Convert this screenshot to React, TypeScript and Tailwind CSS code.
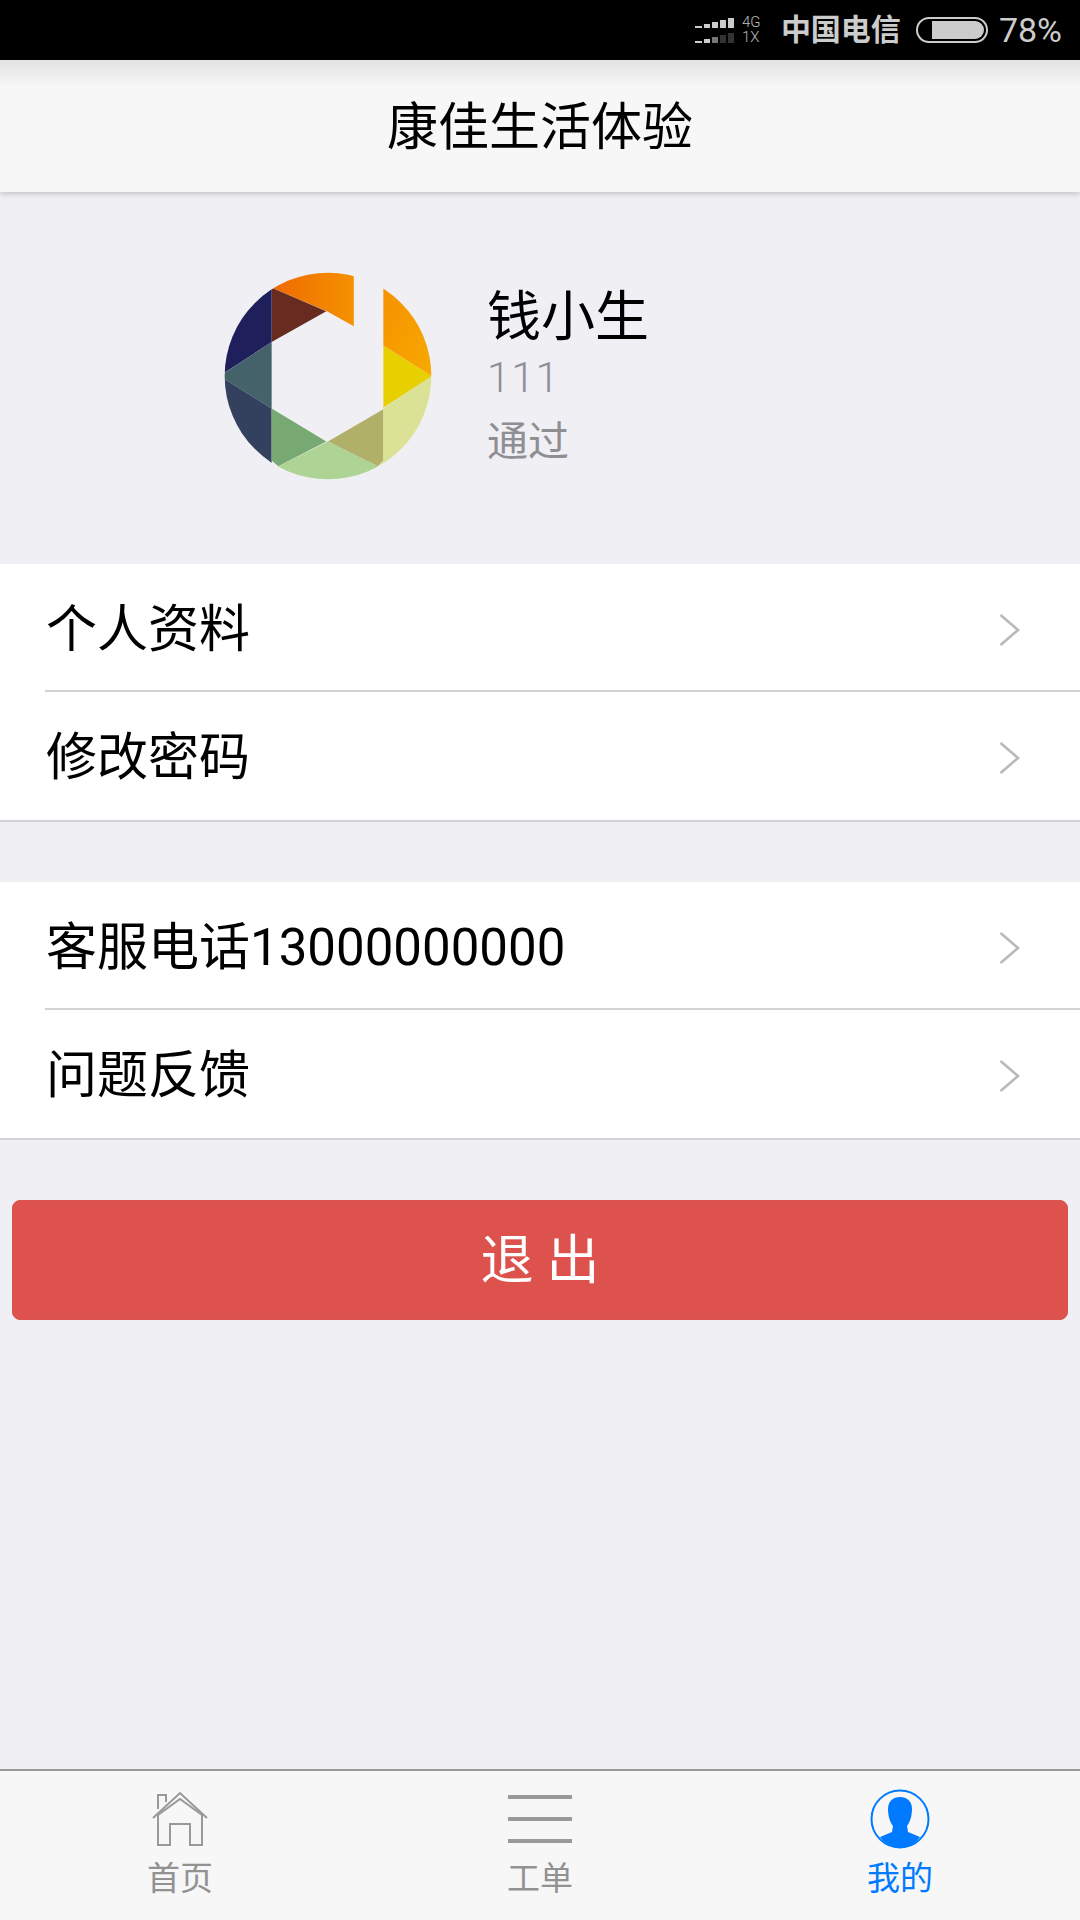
const cjk = "font-['Roboto','Noto_Sans_CJK_SC',sans-serif]";

function SignalRow({ dim }: { dim?: boolean }) {
  const bars = [
    { w: 7, h: 2 },
    { w: 6, h: 4 },
    { w: 6, h: 6 },
    { w: 6, h: 8 },
    { w: 6, h: 10 },
  ];
  return (
    <div className="flex items-end gap-[2px] h-[10px]">
      {bars.map((b, i) => (
        <div
          key={i}
          className={dim && i > 1 ? (i === 2 ? "bg-[#777]" : "bg-[#333]") : "bg-[#ccc]"}
          style={{ width: b.w, height: b.h }}
        />
      ))}
    </div>
  );
}

function StatusBar() {
  return (
    <div className={`h-[60px] bg-black flex items-center justify-end pr-[18px] ${cjk}`}>
      <div className="flex flex-col gap-[5px] mr-[8px]">
        <SignalRow />
        <SignalRow dim />
      </div>
      <div className="flex flex-col text-[#bbb] text-[15px] leading-[15px] font-light mr-[18px] w-[21px]">
        <span>4G</span>
        <span>1X</span>
      </div>
      <span className="text-[#ccc] text-[30px] font-bold leading-none mr-[15px]">中国电信</span>
      <div className="w-[72px] h-[26px] rounded-full border-2 border-[#ccc] p-[2px] flex justify-end mr-[11px]">
        <div className="w-[52px] h-full rounded-r-full bg-[#ccc]" />
      </div>
      <span className="text-[#ccc] text-[34px] leading-none">78%</span>
    </div>
  );
}

function Logo() {
  return (
    <svg width="208" height="208" viewBox="73 63 620 620" className="shrink-0 blur-[0.4px]">
      <defs>
        <clipPath id="disc">
          <circle cx="383" cy="373" r="308" />
        </clipPath>
        <linearGradient id="topOrange" x1="0" y1="0" x2="1" y2="0">
          <stop offset="0" stopColor="#ee6a00" />
          <stop offset="1" stopColor="#f59200" />
        </linearGradient>
        <linearGradient id="sideOrange" x1="0" y1="0" x2="1" y2="1">
          <stop offset="0" stopColor="#f58f00" />
          <stop offset="1" stopColor="#f8ab00" />
        </linearGradient>
      </defs>
      <g clipPath="url(#disc)">
        <polygon points="215,110 300,30 460,30 460,225 380,180" fill="url(#topOrange)" />
        <polygon points="215,110 378,180 215,272" fill="#682b20" />
        <polygon points="60,373 215,272 215,470" fill="#43626a" />
        <polygon points="215,60 215,272 70,366 60,200" fill="#1f1f5c" />
        <polygon points="60,373 215,470 215,630 240,700 60,560" fill="#33415f" />
        <polygon points="215,470 378,568 235,642 215,625" fill="#78a972" />
        <polygon points="235,642 383,568 532,642 532,720 235,720" fill="#aed495" />
        <polygon points="383,568 548,472 548,625 532,642" fill="#b1b069" />
        <polygon points="548,470 700,366 700,720 532,720 532,642 548,625" fill="#dbe195" />
        <polygon points="548,282 692,373 548,468" fill="#e8cf00" />
        <polygon points="548,115 548,282 692,373 720,373 720,40 548,40" fill="url(#sideOrange)" />
      </g>
    </svg>
  );
}

function Chevron() {
  return (
    <svg width="24" height="36" viewBox="0 0 24 36" fill="none" stroke="#b9b9b9" strokeWidth="2.6" className="mt-[2px]">
      <path d="M2.5 3 L20 18 L2.5 33" />
    </svg>
  );
}

function Row({ label, divider }: { label: string; divider?: boolean }) {
  return (
    <div className="relative h-[128px] flex items-center justify-between pl-[46px] pr-[58px] pt-[2px]">
      <span className="text-[51px] leading-none text-black">{label}</span>
      <Chevron />
      {divider && <div className="absolute left-[45px] right-0 bottom-0 h-[2px] bg-[#d2d2d4]" />}
    </div>
  );
}

function HomeIcon() {
  return (
    <svg width="56" height="56" viewBox="0 0 56 56" fill="none" stroke="#999" strokeWidth="2">
      <path d="M1 27 L28 2 L55 27" />
      <path d="M6 24 V54 H18 V33 H38 V54 H50 V24 L28 8 Z" />
      <path d="M6 18 V4 H14 V11" />
    </svg>
  );
}

function ListIcon() {
  return (
    <div className="w-[64px] h-[48px] flex flex-col justify-between">
      <div className="h-[4px] bg-[#999]" />
      <div className="h-[4px] bg-[#999]" />
      <div className="h-[4px] bg-[#999]" />
    </div>
  );
}

function UserIcon() {
  return (
    <svg width="60" height="60" viewBox="0 0 60 60">
      <circle cx="30" cy="30" r="28.5" fill="none" stroke="#007aff" strokeWidth="2" />
      <path
        d="M30 8 C38 8 42 13 42 20 C42 27 40 33 37 37 L38 43 L50 48 C45 55 38 59 30 59 C22 59 15 55 10 48 L22 43 L23 37 C20 33 18 27 18 20 C18 13 22 8 30 8 Z"
        fill="#007aff"
      />
    </svg>
  );
}

function Tab({ icon, label, active }: { icon: React.ReactNode; label: string; active?: boolean }) {
  return (
    <div className="flex-1 flex flex-col items-center">
      <div className="h-[60px] flex items-center justify-center">{icon}</div>
      <span className={`mt-[10px] text-[33px] leading-[40px] ${active ? "text-[#007aff]" : "text-[#929292]"}`}>
        {label}
      </span>
    </div>
  );
}

export default function App() {
  return (
    <div className={`w-[1080px] h-[1920px] flex flex-col bg-[#efeff4] overflow-hidden ${cjk}`}>
      <StatusBar />
      <div className="h-[132px] pt-[2px] flex items-center justify-center shadow-[0_2px_5px_rgba(0,0,0,0.18)] bg-gradient-to-b from-[#e2e2e2] via-[#f7f7f7] via-[20%] to-[#f7f7f7]">
        <h1 className="text-[51px] leading-none text-black font-normal">康佳生活体验</h1>
      </div>

      <div className="h-[372px] flex items-center pl-[224px] pb-[4px]">
        <Logo />
        <div className="ml-[55px] mt-[12px] flex flex-col">
          <span className="text-[54px] leading-[62px] text-black">钱小生</span>
          <span className="text-[42px] leading-[58px] font-light text-[#8e8e93] tracking-[1px]">111</span>
          <span className="text-[41px] leading-[70px] text-[#8e8e93]">通过</span>
        </div>
      </div>

      <div className="bg-white border-b-2 border-[#d2d2d4]">
        <Row label="个人资料" divider />
        <Row label="修改密码" />
      </div>

      <div className="mt-[60px] bg-white border-b-2 border-[#d2d2d4]">
        <Row label="客服电话13000000000" divider />
        <Row label="问题反馈" />
      </div>

      <div className="mt-[60px] mx-[12px] h-[120px] pt-[3px] rounded-[8px] bg-[#dd524d] border border-[#d9534f] flex items-center justify-center text-white text-[53px] leading-none whitespace-pre">
        退 出
      </div>

      <div className="mt-auto h-[151px] bg-[#f7f7f7] border-t-2 border-[#9a9a9a] pt-[18px] flex">
        <Tab icon={<HomeIcon />} label="首页" />
        <Tab icon={<ListIcon />} label="工单" />
        <Tab icon={<UserIcon />} label="我的" active />
      </div>
    </div>
  );
}
